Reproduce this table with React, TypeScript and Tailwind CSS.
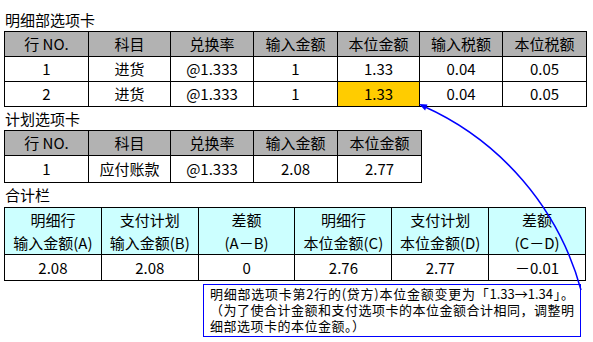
import React from "react";

const font = { fontFamily: '"Noto Sans CJK SC", "Noto Sans", sans-serif' };

const detailRows = [
  { no: "1", item: "进货", rate: "@1.333", input: "1", base: "1.33", tax: "0.04", baseTax: "0.05", hl: false },
  { no: "2", item: "进货", rate: "@1.333", input: "1", base: "1.33", tax: "0.04", baseTax: "0.05", hl: true }
];

const cell = "border border-black text-center p-0 leading-[18px]";

function Title({ children, h, pb }: { children: React.ReactNode; h: string; pb: string }) {
  return <div className={`flex items-end ${h} ${pb} pl-[1px] text-[15px] leading-[15px]`}>{children}</div>;
}

export default function App() {
  return (
    <div className="relative h-[342px] w-[593px] overflow-hidden bg-white px-[4px] text-black" style={font}>
      <Title h="h-[31px]" pb="pb-[4px]">明细部选项卡</Title>
      <table className="w-[582px] table-fixed border-collapse text-[15px]">
        <colgroup>
          <col className="w-[84px]" />
          <col className="w-[82px]" />
          <col className="w-[83px]" />
          <col className="w-[84px]" />
          <col className="w-[82px]" />
          <col className="w-[83px]" />
          <col className="w-[84px]" />
        </colgroup>
        <thead>
          <tr className="h-[25px] bg-[#b2b2b2]">
            {["行 NO.", "科目", "兑换率", "输入金额", "本位金额", "输入税额", "本位税额"].map((t) => (
              <th key={t} className={`${cell} font-normal`}>{t}</th>
            ))}
          </tr>
        </thead>
        <tbody>
          {detailRows.map((r) => (
            <tr key={r.no} className="h-[25px]">
              <td className={cell}>{r.no}</td>
              <td className={cell}>{r.item}</td>
              <td className={cell}>{r.rate}</td>
              <td className={cell}>{r.input}</td>
              <td className={`${cell} ${r.hl ? "bg-[#ffcc00]" : ""}`}>{r.base}</td>
              <td className={cell}>{r.tax}</td>
              <td className={cell}>{r.baseTax}</td>
            </tr>
          ))}
        </tbody>
      </table>

      <Title h="h-[23px]" pb="pb-[4px]">计划选项卡</Title>
      <table className="w-[333px] table-fixed border-collapse text-[15px]">
        <colgroup>
          <col className="w-[84px]" />
          <col className="w-[82px]" />
          <col className="w-[83px]" />
          <col className="w-[84px]" />
          <col className="w-[84px]" />
        </colgroup>
        <thead>
          <tr className="h-[25px] bg-[#b2b2b2]">
            {["行 NO.", "科目", "兑换率", "输入金额", "本位金额"].map((t) => (
              <th key={t} className={`${cell} font-normal`}>{t}</th>
            ))}
          </tr>
        </thead>
        <tbody>
          <tr className="h-[27px]">
            <td className={cell}>1</td>
            <td className={cell}>应付账款</td>
            <td className={cell}>@1.333</td>
            <td className={cell}>2.08</td>
            <td className={cell}>2.77</td>
          </tr>
        </tbody>
      </table>

      <Title h="h-[24px]" pb="pb-[5px]">合计栏</Title>
      <table className="w-[582px] table-fixed border-collapse text-[15px]">
        <thead>
          <tr className="h-[47px] bg-[#ccffff]">
            {[
              ["明细行", "输入金额(A)"],
              ["支付计划", "输入金额(B)"],
              ["差额", "(A－B)"],
              ["明细行", "本位金额(C)"],
              ["支付计划", "本位金额(D)"],
              ["差额", "(C－D)"]
            ].map(([a, b], i) => (
              <th key={i} className={`${cell} font-normal`}>
                <div className="leading-[23px]">{a}</div>
                <div className="leading-[23px]">{b}</div>
              </th>
            ))}
          </tr>
        </thead>
        <tbody>
          <tr className="h-[26px]">
            {["2.08", "2.08", "0", "2.76", "2.77", "－0.01"].map((v, i) => (
              <td key={i} className={cell}>{v}</td>
            ))}
          </tr>
        </tbody>
      </table>

      <div className="ml-[199px] mt-[3px] h-[53px] w-[378px] overflow-hidden border border-[#0000ff] px-[6px] pt-[1px] text-[13px] leading-[16px]">
        <div className="text-justify [text-align-last:justify]">明细部选项卡第2行的(贷方)本位金额变更为「1.33→1.34」。</div>
        <div className="text-justify [text-align-last:justify]">（为了使合计金额和支付选项卡的本位金额合计相同，调整明</div>
        <div className="tracking-[0.5px]">细部选项卡的本位金额。）</div>
      </div>

      <svg className="pointer-events-none absolute left-0 top-0" width="593" height="342" viewBox="0 0 593 342">
        <path d="M 581 290 A 283 283 0 0 0 423 106" fill="none" stroke="#0000ff" strokeWidth="1.5" />
        <polygon points="419,104 427.5,104.4 425.1,110.5" fill="#0000ff" />
      </svg>
    </div>
  );
}
